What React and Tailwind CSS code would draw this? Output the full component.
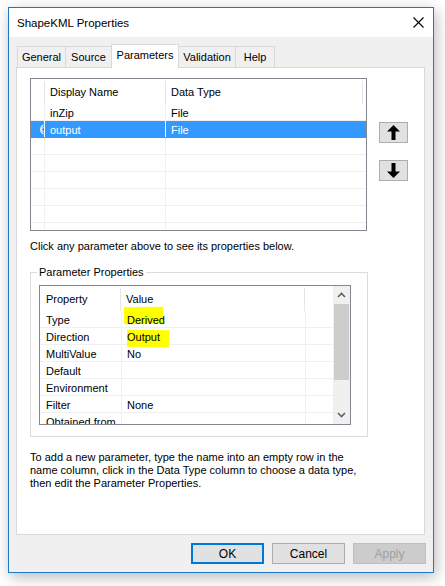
import React from 'react';

const gridRows = [
  { name: 'inZip', type: 'File' },
  { name: 'output', type: 'File', selected: true },
  {}, {}, {}, {}, {}, {},
];

const propRows = [
  { key: 'Type', value: 'Derived', mark: 'w-[39px] left-[2px] -top-[4px] h-[17px] -rotate-1' },
  { key: 'Direction', value: 'Output', mark: 'w-[42px] left-[5px] top-[2px] h-[17px] rotate-1' },
  { key: 'MultiValue', value: 'No' },
  { key: 'Default', value: '' },
  { key: 'Environment', value: '' },
  { key: 'Filter', value: 'None' },
  { key: 'Obtained from', value: '' },
];

const tabs = [
  { label: 'General', w: 'w-[49px]' },
  { label: 'Source', w: 'w-[47px]' },
  { label: 'Parameters', w: 'w-[68px]', active: true },
  { label: 'Validation', w: 'w-[58px]' },
  { label: 'Help', w: 'w-[40px]' },
];

function CloseIcon() {
  return (
    <svg width="11" height="11" viewBox="0 0 11 11" className="block">
      <path d="M0.5 0.5 L10.5 10.5 M10.5 0.5 L0.5 10.5" stroke="#000" strokeWidth="1.1" fill="none" />
    </svg>
  );
}

function Arrow({ down }) {
  return (
    <svg width="13" height="15" viewBox="0 0 13 15" className={down ? 'block rotate-180' : 'block'}>
      <polygon points="6.5,0 13,6.5 8.5,6.5 8.5,15 4.5,15 4.5,6.5 0,6.5" fill="#000" />
    </svg>
  );
}

function Chevron({ down }) {
  return (
    <svg width="9" height="6" viewBox="0 0 9 6" className="block">
      <path d={down ? 'M1 1 L4.5 4.5 L8 1' : 'M1 5 L4.5 1.5 L8 5'} stroke="#606060" strokeWidth="1.6" fill="none" />
    </svg>
  );
}

// current-row marker in the row header, cut off by the narrow column
function RowMarker() {
  return (
    <svg width="6" height="11" viewBox="0 0 6 11" className="block">
      <path d="M5.5 1 A5 5 0 0 0 5.5 10" stroke="#fff" strokeWidth="1.1" fill="none" />
      <path d="M5.5 3.5 A2 2 0 0 0 5.5 7.5" stroke="#fff" strokeWidth="1" fill="none" />
    </svg>
  );
}

function ParamGrid() {
  return (
    <div className="w-[337px] h-[153px] border border-[#828790] bg-white overflow-hidden">
      <div className="flex h-[25px] items-center pt-[2px]">
        <div className="w-[14px] h-full border-r border-[#e5e5e5]" />
        <div className="w-[121px] h-full pl-[5px] flex items-center border-r border-[#e5e5e5]">Display Name</div>
        <div className="w-[197px] h-full pl-[5px] flex items-center border-r border-[#e5e5e5]">Data Type</div>
      </div>
      {gridRows.map((r, i) => (
        <div
          key={i}
          className={
            'flex h-[17px] border-b ' +
            (r.selected ? 'bg-[#3399ff] text-white border-[#3399ff]' : 'border-[#f0f0f0]')
          }
        >
          <div className={'w-[14px] h-full overflow-hidden pl-[7px] flex items-center border-r ' + (r.selected ? 'border-white' : 'border-[#f0f0f0]')}>
            {r.selected && <RowMarker />}
          </div>
          <div className={'w-[121px] h-full pl-[5px] pt-[1px] leading-[16px] border-r ' + (r.selected ? 'border-white' : 'border-[#f0f0f0]')}>
            {r.name}
          </div>
          <div className="flex-1 h-full pl-[5px] pt-[1px] leading-[16px]">{r.type}</div>
        </div>
      ))}
    </div>
  );
}

function PropertyGrid() {
  return (
    <div className="w-[312px] h-[140px] border border-[#828790] bg-white flex overflow-hidden">
      <div className="flex-1 flex flex-col">
        <div className="flex h-[25px] shrink-0 pt-[2px]">
          <div className="w-[81px] pl-[6px] flex items-center border-r border-[#e5e5e5]">Property</div>
          <div className="w-[184px] pl-[5px] flex items-center border-r border-[#e5e5e5]">Value</div>
          <div className="flex-1" />
        </div>
        {propRows.map((r) => (
          <div key={r.key} className="flex h-[17px] shrink-0 border-b border-[#f0f0f0]">
            <div className="w-[82px] pl-[6px] pt-[2px] leading-[15px] border-r border-[#f0f0f0] whitespace-nowrap">{r.key}</div>
            <div className="w-[184px] pl-[5px] pt-[2px] leading-[15px] border-r border-[#f0f0f0] relative">
              {r.mark && <span className={'absolute bg-[#ffff00] ' + r.mark} />}
              <span className="relative">{r.value}</span>
            </div>
            <div className="flex-1" />
          </div>
        ))}
      </div>
      <div className="w-[17px] bg-[#f0f0f0] flex flex-col">
        <div className="h-[18px] flex items-center justify-center">
          <Chevron />
        </div>
        <div className="h-[76px] mx-[1px] bg-[#cdcdcd]" />
        <div className="flex-1" />
        <div className="h-[18px] flex items-center justify-center">
          <Chevron down />
        </div>
      </div>
    </div>
  );
}

function DialogButton({ children, primary, disabled }) {
  return (
    <div
      className={
        'w-[73px] h-[21px] flex items-center justify-center text-[12px] ' +
        (primary
          ? 'border-2 border-[#0078d7] bg-[#e1e1e1]'
          : disabled
          ? 'border border-[#bfbfbf] bg-[#cccccc] text-[#a0a0a0]'
          : 'border border-[#adadad] bg-[#e1e1e1]')
      }
    >
      {children}
    </div>
  );
}

export default function App() {
  return (
    <div className="min-h-[586px] bg-white pl-[8px] pt-[7px] font-['Liberation_Sans',sans-serif] text-[11px] text-black">
      <div className="w-[426px] h-[566px] border border-[#1c78c9] bg-[#f0f0f0] flex flex-col shadow-[2px_4px_14px_rgba(0,0,0,0.28)]">
        {/* title bar */}
        <div className="h-[29px] bg-white flex items-center justify-between pl-[8px] pr-[9px]">
          <span className="pt-[2px] text-[11.5px]">ShapeKML Properties</span>
          <CloseIcon />
        </div>

        <div className="flex flex-col pl-[7px] pt-[7px]">
          {/* tabs */}
          <div className="flex items-end pl-[1px] h-[23px]">
            {tabs.map((t, i) => (
              <div
                key={t.label}
                className={
                  t.w +
                  ' flex items-center justify-center border-l border-t border-r border-[#d9d9d9] ' +
                  (i > 0 ? '-ml-px ' : '') +
                  (t.active ? 'h-[24px] bg-white relative z-10 -mb-px pb-[3px]' : 'h-[21px] bg-[#f0f0f0]')
                }
              >
                {t.label}
              </div>
            ))}
          </div>

          {/* tab page */}
          <div className="w-[409px] h-[468px] border border-[#d9d9d9] bg-white pl-[13px] pt-[10px]">
            <div className="flex">
              <ParamGrid />
              <div className="flex flex-col ml-[12px] pt-[44px] gap-[17px]">
                <div className="w-[29px] h-[21px] border border-[#adadad] bg-[#e1e1e1] flex items-center justify-center">
                  <Arrow />
                </div>
                <div className="w-[29px] h-[21px] border border-[#adadad] bg-[#e1e1e1] flex items-center justify-center">
                  <Arrow down />
                </div>
              </div>
            </div>

            <p className="mt-[9px] leading-[13px] whitespace-nowrap">Click any parameter above to see its properties below.</p>

            <fieldset className="mt-[13px] w-[338px] border border-[#dcdcdc] pl-[8px] pb-[11px]">
              <legend className="-ml-[2px] px-[2px] leading-[13px]">Parameter Properties</legend>
              <div className="mt-[6px]">
                <PropertyGrid />
              </div>
            </fieldset>

            <p className="mt-[14px] leading-[13px] whitespace-nowrap">
              To add a new parameter, type the name into an empty row in the
              <br />
              name column, click in the Data Type column to choose a data type,
              <br />
              then edit the Parameter Properties.
            </p>
          </div>

          {/* dialog buttons */}
          <div className="flex justify-end gap-[8px] pr-[7px] mt-[8px]">
            <DialogButton primary>OK</DialogButton>
            <DialogButton>Cancel</DialogButton>
            <DialogButton disabled>Apply</DialogButton>
          </div>
        </div>
      </div>
    </div>
  );
}
